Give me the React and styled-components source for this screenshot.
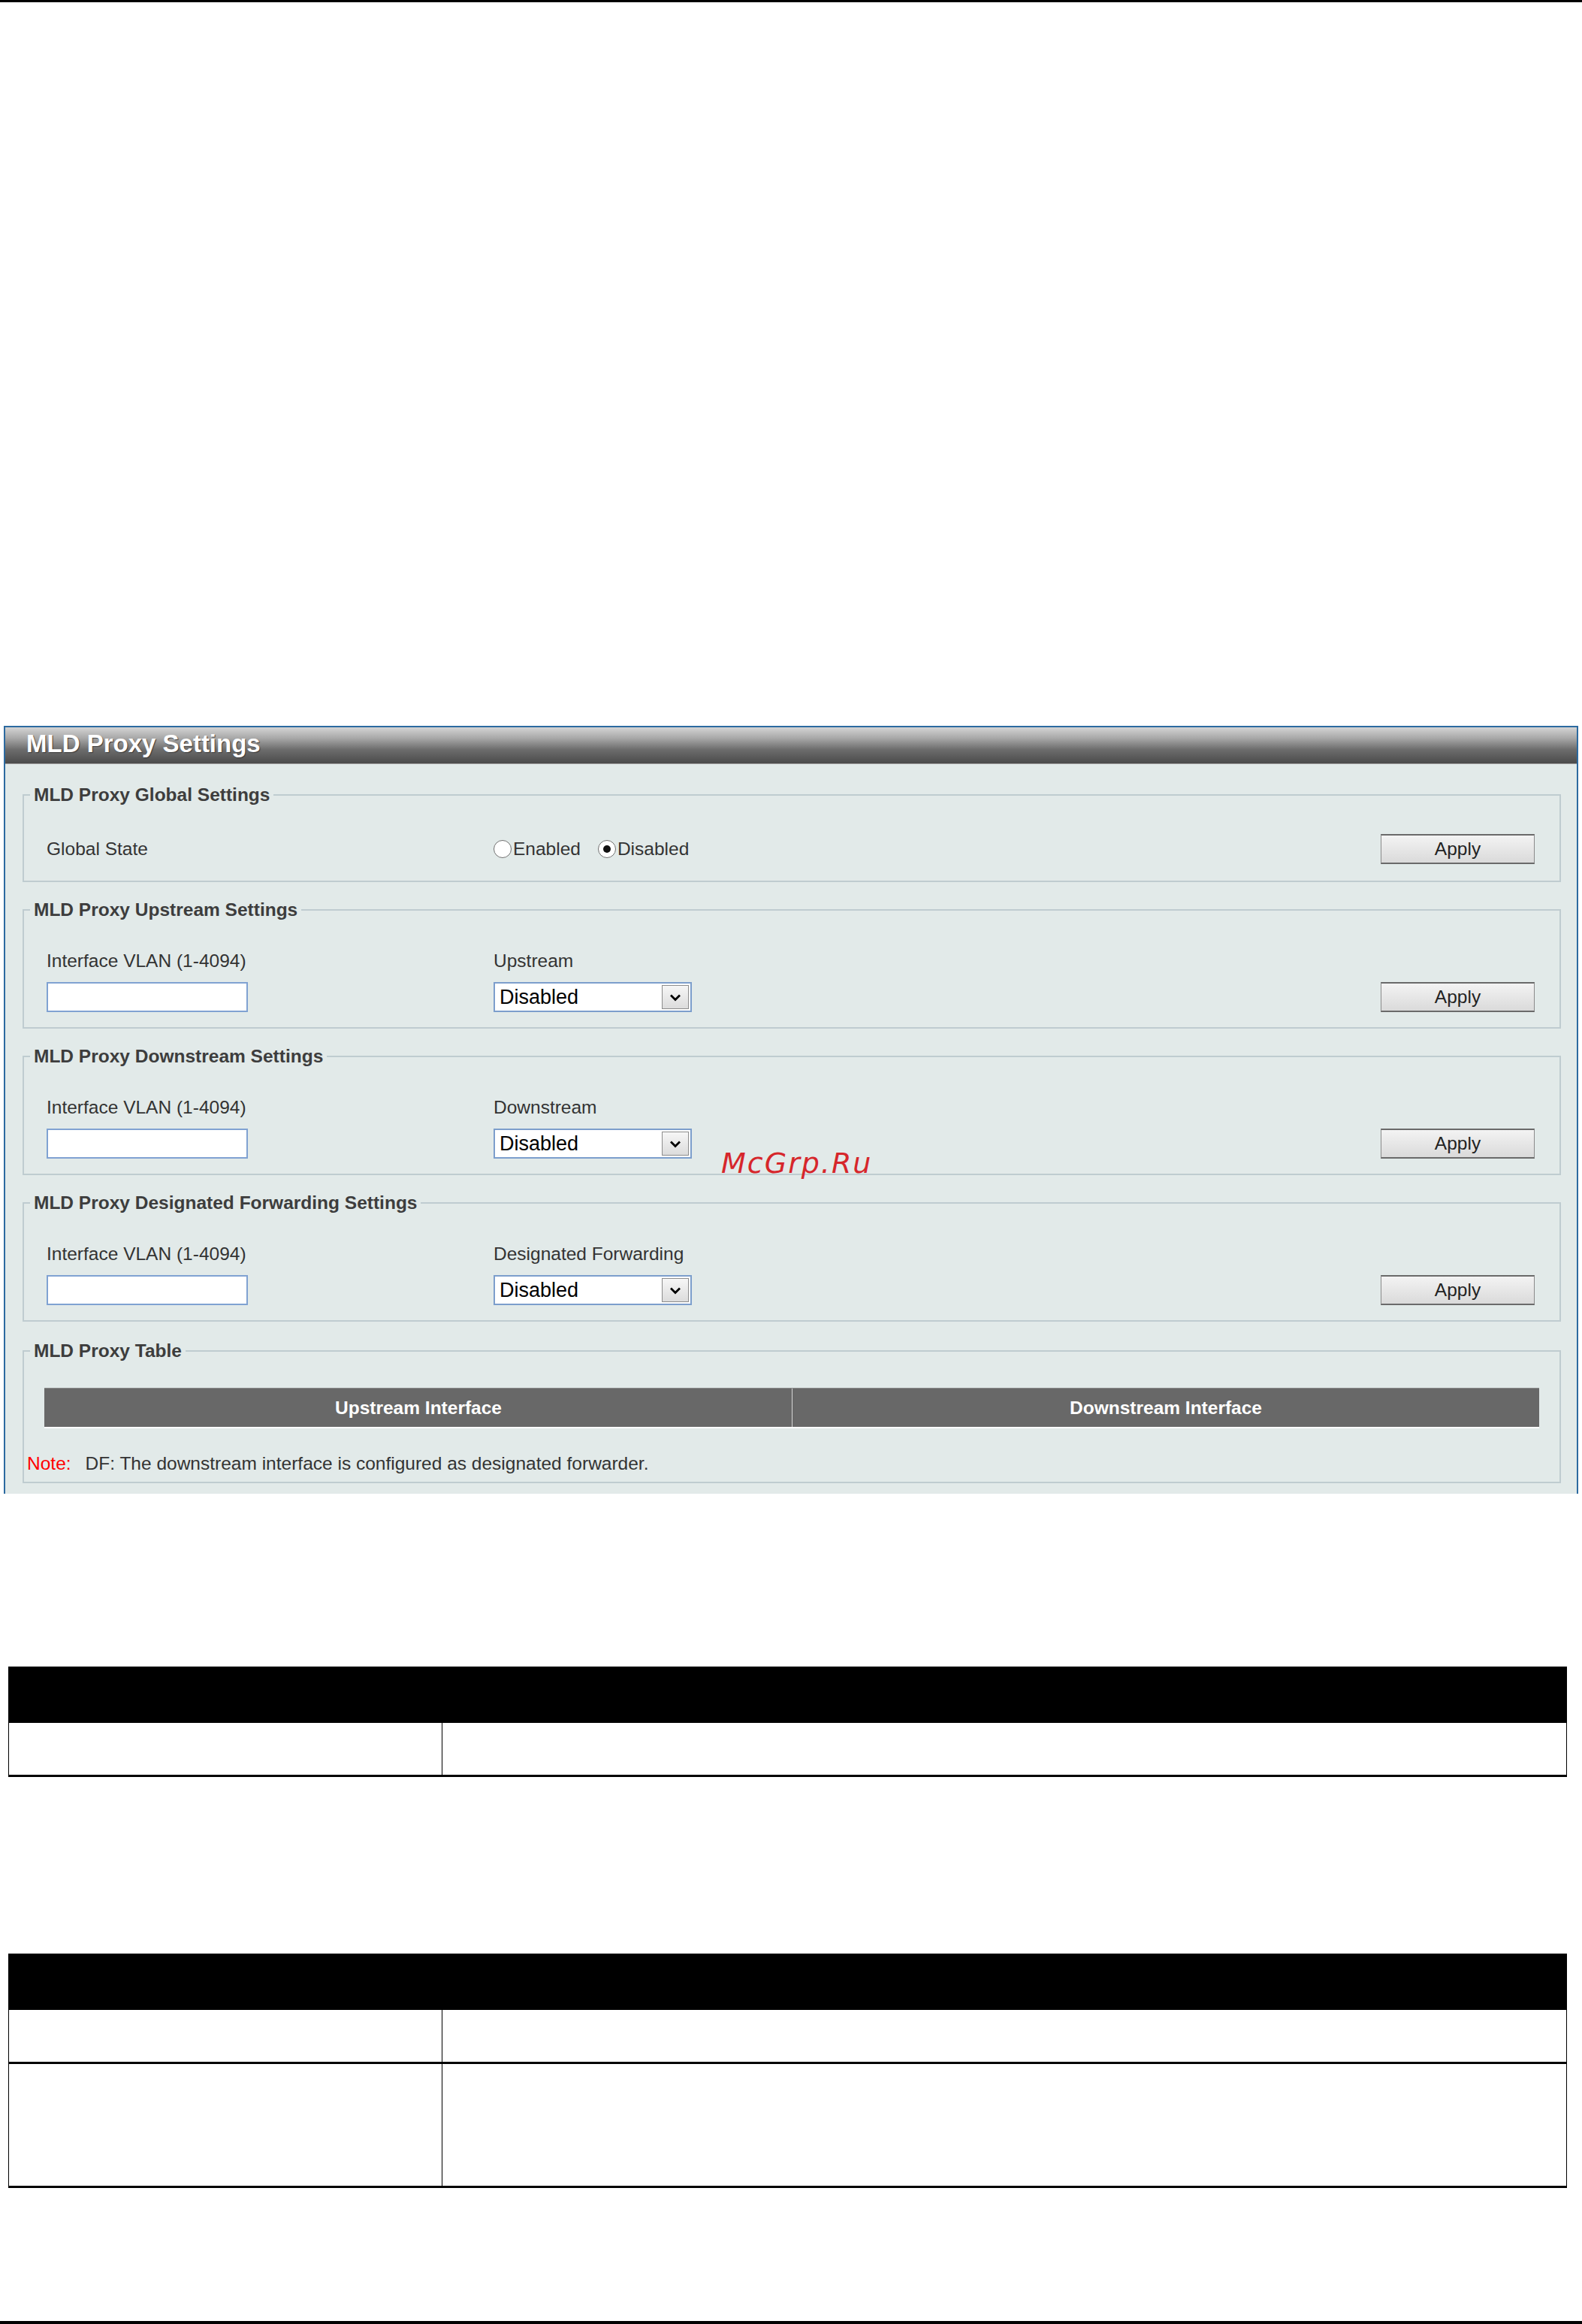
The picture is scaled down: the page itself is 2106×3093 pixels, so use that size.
import styled, { createGlobalStyle, css } from "styled-components";

const GlobalStyle = createGlobalStyle`
  html, body {
    margin: 0;
    padding: 0;
    background: #fff;
  }
  body {
    font-family: "Liberation Sans", Arial, sans-serif;
  }
`;

const Page = styled.div`
  position: relative;
  width: 2106px;
  height: 3093px;
  display: flex;
  flex-direction: column;
  overflow: hidden;
  background: #fff;
`;

const Rule = styled.div`
  flex-shrink: 0;
  height: ${(p) => p.$h}px;
  background: #000;
  margin-top: ${(p) => (p.$bottom ? "auto" : "0")};
`;

const Panel = styled.section`
  margin: 963px 0 0 5px;
  width: 2096px;
  box-sizing: border-box;
  border: 2px solid #2c6aa0;
  border-bottom: none;
  background: #e2eae9;
`;

const PanelHeader = styled.div`
  box-sizing: border-box;
  height: 49px;
  padding-left: 28px;
  background: linear-gradient(#d4d4d4 0%, #a8a8a8 30%, #6c6c6c 62%, #4b4b4b 100%);
  border-bottom: 1px solid #a0a0a0;
  color: #fff;
  font: bold 33px/44px "Liberation Sans", Arial, sans-serif;
  text-shadow: 1px 1px 1px #3a3a3a;
`;

const PanelBody = styled.div`
  display: flex;
  flex-direction: column;
  gap: 23px;
  padding: 27px 0 14px;
`;

const Group = styled.fieldset`
  margin: ${(p) => p.$top || 0}px 21px 0 23px;
  padding: 0;
  min-width: 0;
  border: 2px solid #bfccd0;
`;

const Legend = styled.legend`
  margin-left: 8px;
  padding: 0 5px;
  font: bold 24.5px/28px "Liberation Sans", Arial, sans-serif;
  color: #3d3d3d;
`;

const Content = styled.div`
  padding: ${(p) => p.$pad};
`;

const Row = styled.div`
  display: flex;
  align-items: center;
  height: 40px;
`;

const FormGrid = styled.div`
  display: grid;
  grid-template-columns: 595px 264px 1fr 205px;
  grid-template-rows: 28px 40px;
  grid-template-areas:
    "vlanLabel fieldLabel . ."
    "vlanInput fieldInput . apply";
  row-gap: 14px;
  align-items: center;
`;

const Cell = styled.div`
  grid-area: ${(p) => p.$area};
  display: flex;
  align-items: center;
`;

const Label = styled.span`
  font-size: 24.5px;
  line-height: 28px;
  color: #333;
  ${(p) =>
    p.$w &&
    css`
      width: ${p.$w}px;
      flex-shrink: 0;
    `}
`;

const Radios = styled.div`
  display: flex;
  align-items: center;
  font-size: 24.5px;
  color: #333;
`;

const RadioItem = styled.label`
  display: flex;
  align-items: center;
  margin-right: 23px;
`;

const Radio = styled.span`
  position: relative;
  display: inline-block;
  width: 24px;
  height: 24px;
  margin-right: 2px;
  box-sizing: border-box;
  border-radius: 50%;
  border: 1.5px solid #6f6f6f;
  background: #fff;
  ${(p) =>
    p.$checked &&
    css`
      &::after {
        content: "";
        position: absolute;
        left: 50%;
        top: 50%;
        width: 10px;
        height: 10px;
        margin: -5px 0 0 -5px;
        border-radius: 50%;
        background: #111;
      }
    `}
`;

const ApplyButton = styled.button`
  margin-left: auto;
  width: 205px;
  height: 40px;
  box-sizing: border-box;
  border: 1px solid #8a8a8a;
  border-top: 2px solid #6a6a6a;
  border-bottom: 2px solid #6a6a6a;
  background: linear-gradient(#f3f3f3, #dadada);
  color: #222;
  font: 24.5px "Liberation Sans", Arial, sans-serif;
  padding: 0;
`;

const TextInput = styled.div`
  width: 268px;
  height: 40px;
  box-sizing: border-box;
  border: 2px solid #80a2d2;
  background: #fff;
`;

const SelectBox = styled.div`
  display: flex;
  align-items: center;
  justify-content: space-between;
  width: 264px;
  height: 40px;
  box-sizing: border-box;
  padding-left: 6px;
  border: 2px solid #7c9ecc;
  background: #fff;
  color: #000;
  font-size: 27px;
`;

const SelectArrow = styled.span`
  display: flex;
  align-items: center;
  justify-content: center;
  width: 36px;
  height: 32px;
  margin-right: 2px;
  box-sizing: border-box;
  border: 1px solid #8c8c8c;
  background: linear-gradient(#f6f6f6, #dcdcdc);
`;

const ProxyTable = styled.div`
  display: grid;
  grid-template-columns: 1fr 1fr;
  margin: 35px 27px 0;
  border-top: 1px solid #8a8a8a;
  border-bottom: 2px solid #fff;
`;

const ProxyHead = styled.div`
  display: flex;
  align-items: center;
  justify-content: center;
  height: 51px;
  background: #686868;
  color: #fff;
  font-weight: bold;
  font-size: 24.5px;
  border-left: 1px solid ${(p) => (p.$first ? "#686868" : "#d4d4d4")};
`;

const Note = styled.p`
  margin: 33px 0 0;
  padding: 0 0 10px 4px;
  font-size: 24.5px;
  line-height: 28px;
  color: #333;
`;

const NoteTag = styled.span`
  color: #f00;
  margin-right: 19px;
`;

const Watermark = styled.div`
  position: absolute;
  left: 960px;
  top: 1529px;
  font: italic 38px/38px "DejaVu Sans", sans-serif;
  letter-spacing: 2px;
  color: #d6262b;
`;

const DocTable = styled.table`
  width: 2075px;
  margin: ${(p) => p.$top}px 0 0 11px;
  border-collapse: collapse;
  table-layout: fixed;
`;

const DocHead = styled.th`
  height: 73px;
  padding: 0;
  background: #000;
  border: 1px solid #000;
`;

const DocCell = styled.td`
  height: ${(p) => p.$h}px;
  padding: 0;
  border-left: 1px solid #000;
  border-right: 1px solid #000;
  border-bottom: 3px solid #000;
`;

const Chevron = () => (
  <svg width="16" height="11" viewBox="0 0 16 11">
    <polyline points="2,2.5 8,8.5 14,2.5" fill="none" stroke="#000" strokeWidth="2.8" />
  </svg>
);

const Select = () => (
  <SelectBox>
    <span>Disabled</span>
    <SelectArrow>
      <Chevron />
    </SelectArrow>
  </SelectBox>
);

const VlanGroup = ({ title, field }) => (
  <Group>
    <Legend>{title}</Legend>
    <Content $pad="40px 33px 20px 30px">
      <FormGrid>
        <Cell $area="vlanLabel">
          <Label>Interface VLAN (1-4094)</Label>
        </Cell>
        <Cell $area="fieldLabel">
          <Label>{field}</Label>
        </Cell>
        <Cell $area="vlanInput">
          <TextInput />
        </Cell>
        <Cell $area="fieldInput">
          <Select />
        </Cell>
        <Cell $area="apply">
          <ApplyButton>Apply</ApplyButton>
        </Cell>
      </FormGrid>
    </Content>
  </Group>
);

const DocTableBlock = ({ top, rows }) => (
  <DocTable $top={top}>
    <colgroup>
      <col style={{ width: "577px" }} />
      <col />
    </colgroup>
    <thead>
      <tr>
        <DocHead colSpan={2} />
      </tr>
    </thead>
    <tbody>
      {rows.map((h, i) => (
        <tr key={i}>
          <DocCell $h={h} />
          <DocCell $h={h} />
        </tr>
      ))}
    </tbody>
  </DocTable>
);

export default function App() {
  return (
    <>
      <GlobalStyle />
      <Page>
        <Rule $h={3} />
        <Panel>
          <PanelHeader>MLD Proxy Settings</PanelHeader>
          <PanelBody>
            <Group>
              <Legend>MLD Proxy Global Settings</Legend>
              <Content $pad="38px 33px 22px 30px">
                <Row>
                  <Label $w={595}>Global State</Label>
                  <Radios>
                    <RadioItem>
                      <Radio />
                      Enabled
                    </RadioItem>
                    <RadioItem>
                      <Radio $checked />
                      Disabled
                    </RadioItem>
                  </Radios>
                  <ApplyButton>Apply</ApplyButton>
                </Row>
              </Content>
            </Group>
            <VlanGroup title="MLD Proxy Upstream Settings" field="Upstream" />
            <VlanGroup title="MLD Proxy Downstream Settings" field="Downstream" />
            <VlanGroup
              title="MLD Proxy Designated Forwarding Settings"
              field="Designated Forwarding"
            />
            <Group $top={2}>
              <Legend>MLD Proxy Table</Legend>
              <ProxyTable>
                <ProxyHead $first>Upstream Interface</ProxyHead>
                <ProxyHead>Downstream Interface</ProxyHead>
              </ProxyTable>
              <Note>
                <NoteTag>Note:</NoteTag>DF: The downstream interface is configured as designated
                forwarder.
              </Note>
            </Group>
          </PanelBody>
        </Panel>
        <DocTableBlock top={230} rows={[69]} />
        <DocTableBlock top={235} rows={[69, 162]} />
        <Rule $h={4} $bottom />
        <Watermark>McGrp.Ru</Watermark>
      </Page>
    </>
  );
}
